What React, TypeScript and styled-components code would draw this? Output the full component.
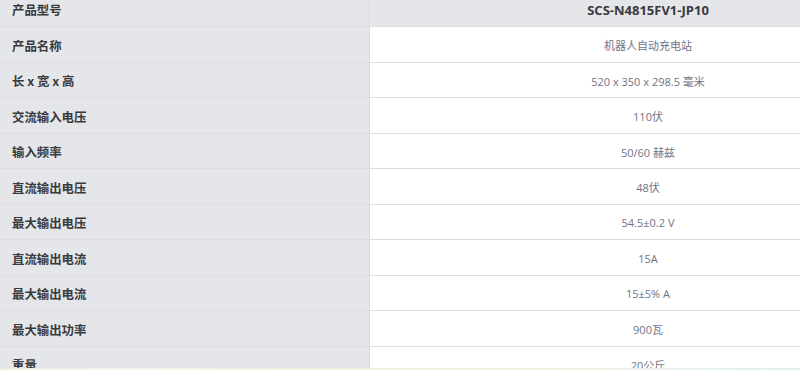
import React from "react";
import styled, { createGlobalStyle } from "styled-components";

const GlobalStyle = createGlobalStyle`
  html, body {
    margin: 0;
    padding: 0;
    background: #ffffff;
  }
  body {
    font-family: "Open Sans", "Noto Sans CJK SC", sans-serif;
  }
`;

const Page = styled.div`
  width: 800px;
  height: 370px;
  display: flex;
  flex-direction: column;
  overflow: hidden;
`;

const Viewport = styled.div`
  flex: 1;
  overflow: hidden;
`;

const Table = styled.div`
  width: 926px;
  margin-top: -8.5px;
  display: flex;
  flex-direction: column;
`;

const Row = styled.div`
  display: grid;
  grid-template-columns: 369px 1px 556px;
  height: 35.5px;
  border-bottom: 1px solid #dcdde0;
  box-sizing: border-box;
`;

const Label = styled.div`
  background: #e5e6ea;
  display: flex;
  align-items: center;
  padding: 3px 0 0 12px;
  font-family: "Noto Sans CJK SC", sans-serif;
  font-size: 12.4px;
  font-weight: 600;
  color: #3a3a3c;
`;

const Divider = styled.div`
  background: #d8d9dd;
`;

const Value = styled.div<{ $head?: boolean }>`
  background: ${(p) => (p.$head ? "#e5e6ea" : "#ffffff")};
  display: flex;
  align-items: center;
  justify-content: center;
  padding-top: ${(p) => (p.$head ? "3px" : "2px")};
  font-family: "Open Sans", "Noto Sans CJK SC", sans-serif;
  font-size: ${(p) => (p.$head ? "13px" : "11px")};
  font-weight: ${(p) => (p.$head ? 700 : 400)};
  color: ${(p) => (p.$head ? "#3a3a3c" : "#6f7386")};
`;

const BottomStrip = styled.div`
  height: 2px;
  background: linear-gradient(
    90deg,
    #e9efe3 0%,
    #f4f6ee 15%,
    #eef2df 40%,
    #f3f1dc 60%,
    #e8f1ec 85%,
    #e3eff0 100%
  );
`;

const specs: [string, string][] = [
  ["产品型号", "SCS-N4815FV1-JP10"],
  ["产品名称", "机器人自动充电站"],
  ["长 x 宽 x 高", "520 x 350 x 298.5 毫米"],
  ["交流输入电压", "110伏"],
  ["输入频率", "50/60 赫兹"],
  ["直流输出电压", "48伏"],
  ["最大输出电压", "54.5±0.2 V"],
  ["直流输出电流", "15A"],
  ["最大输出电流", "15±5% A"],
  ["最大输出功率", "900瓦"],
  ["重量", "20公斤"],
];

export default function App() {
  return (
    <Page>
      <GlobalStyle />
      <Viewport>
        <Table>
          {specs.map(([label, value], i) => (
            <Row key={label}>
              <Label>{label}</Label>
              <Divider />
              <Value $head={i === 0}>{value}</Value>
            </Row>
          ))}
        </Table>
      </Viewport>
      <BottomStrip />
    </Page>
  );
}
